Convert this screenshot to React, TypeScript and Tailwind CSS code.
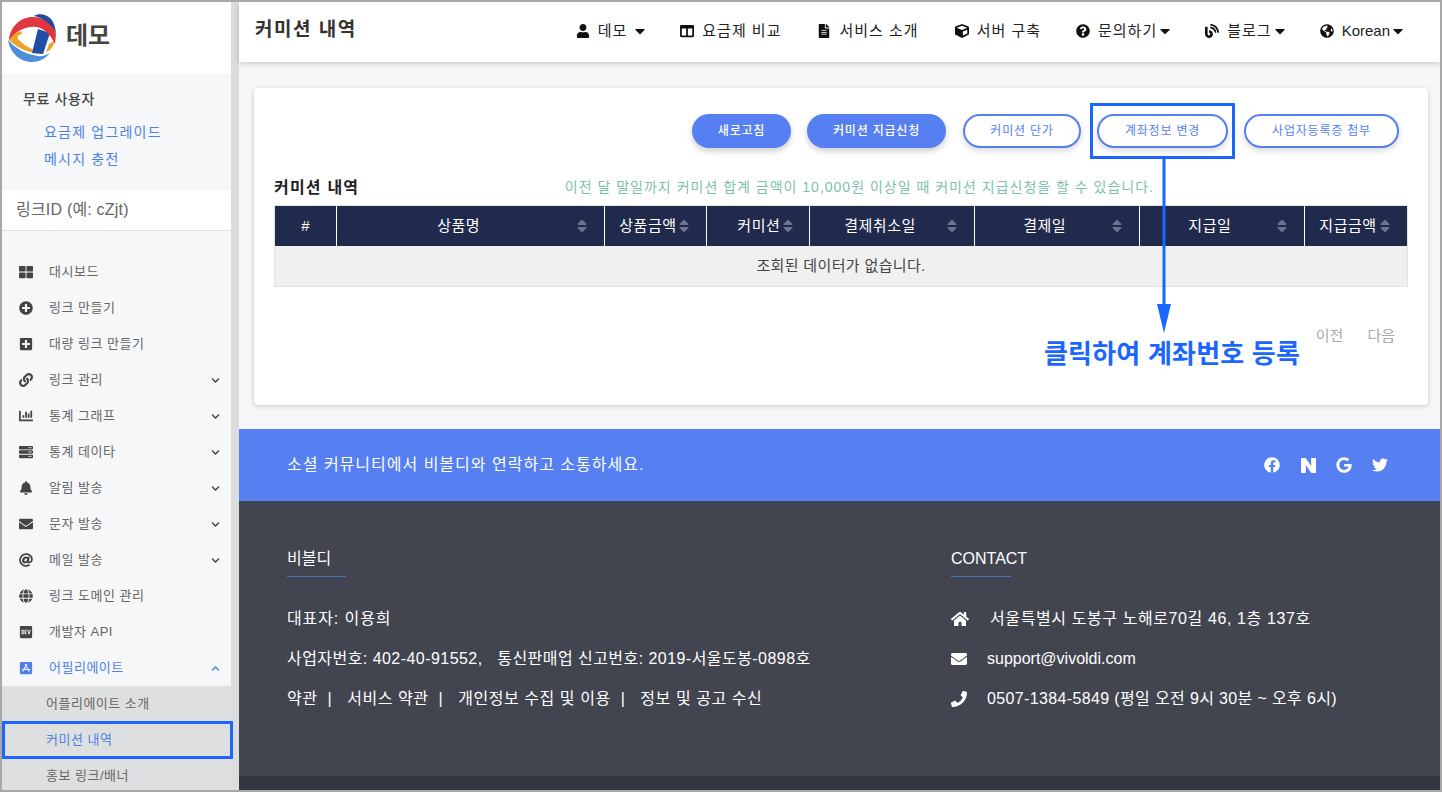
import React from 'react';
import {
  FaUser, FaColumns, FaFileAlt, FaCube, FaQuestionCircle, FaBlog, FaGlobeAmericas, FaThLarge, FaPlusCircle,
  FaPlusSquare, FaLink, FaChartBar, FaServer, FaBell, FaEnvelope, FaAt, FaGlobe, FaDev, FaAppStoreIos,
  FaChevronDown, FaChevronUp, FaHome, FaPhoneAlt, FaFacebook, FaGoogle, FaTwitter, FaSort, FaCaretDown,
} from 'react-icons/fa';
import { SiNaver } from 'react-icons/si';

const font = "font-['Liberation_Sans','Noto_Sans_CJK_KR',sans-serif]";

const menu = [
  { icon: <FaThLarge />, label: '대시보드' },
  { icon: <FaPlusCircle />, label: '링크 만들기' },
  { icon: <FaPlusSquare />, label: '대량 링크 만들기' },
  { icon: <FaLink />, label: '링크 관리', more: true },
  { icon: <FaChartBar />, label: '통계 그래프', more: true },
  { icon: <FaServer />, label: '통계 데이타', more: true },
  { icon: <FaBell />, label: '알림 발송', more: true },
  { icon: <FaEnvelope />, label: '문자 발송', more: true },
  { icon: <FaAt />, label: '메일 발송', more: true },
  { icon: <FaGlobe />, label: '링크 도메인 관리' },
  { icon: <FaDev />, label: '개발자 API' },
];

const nav = [
  { icon: <FaUser />, label: '데모', caret: 'ml-[-3px]' },
  { icon: <FaColumns />, label: '요금제 비교', box: 'mr-[1px]' },
  { icon: <FaFileAlt />, label: '서비스 소개', box: 'mr-[1px]' },
  { icon: <FaCube />, label: '서버 구축' },
  { icon: <FaQuestionCircle />, label: '문의하기', caret: 'ml-[-8px]' },
  { icon: <FaBlog />, label: '블로그', caret: 'ml-[-8px]' },
  { icon: <FaGlobeAmericas />, label: 'Korean', caret: 'ml-[-8px]', latin: true },
];

const columns = [
  { label: '상품명', width: 'w-[268px]', pad: 'pl-[6px]' },
  { label: '상품금액', width: 'w-[102px]', pad: 'pl-[14px]' },
  { label: '커미션', width: 'w-[103px]', pad: 'pl-[30px]' },
  { label: '결제취소일', width: 'w-[164px]', pad: 'pl-[6px]' },
  { label: '결제일', width: 'w-[165px]', pad: 'pl-[6px]' },
  { label: '지급일', width: 'w-[165px]', pad: 'pl-[6px]' },
  { label: '지급금액', width: 'w-[103px]', pad: 'pl-[14px]' },
];

const Logo = () => (
  <svg viewBox="0 0 48 50" className="h-[50px] w-[48px] shrink-0">
    <path d="M1 27C5 21 9 19 13 18L14 21C10 22 9 24 10 26C13 30 22 36 31 39L36 41C24 41 10 36 1 27z" fill="#eda12f" />
    <path d="M38 39L41 31L46 28C46 33 43 37 38 39z" fill="#eda12f" />
    <path d="M0 27C6 34 16 41 30 43C34 44 38 42 42 40C37 46 31 49 24 49C12 49 2 40 0 27z" fill="#4d90d6" />
    <path d="M30 16L42 20L35 41L24 40z" fill="#1f4ea8" />
    <path d="M1 27C2 14 12 4 25 4C36 4 46 12 48 21L47 31C42 21 36 15 28 14C18 13 8 18 1 27z" fill="#e2363f" />
    <path d="M26 3C30 0 38 1 42 5C45 8 47 12 48 20C44 12 36 5 26 3z" fill="#27479b" />
  </svg>
);

const Sidebar = () => (
  <aside className="flex h-full w-[237px] shrink-0 flex-col border-r-[8px] border-[#dcdcdc] bg-[#f5f7f9]">
    <div className="flex h-[72px] shrink-0 items-center gap-[10px] bg-white pl-[6px]">
      <Logo />
      <span className="mb-[4px] text-[24px] font-bold text-[#444]">데모</span>
    </div>
    <div className="h-[116px] shrink-0 pl-[21px] pt-[15px]">
      <p className="text-[14px] font-medium tracking-[0.6px] text-[#444]">무료 사용자</p>
      <div className="mt-[12px] flex flex-col gap-[6px] pl-[21px] text-[14px] tracking-[1.2px] text-[#4f7fe6]">
        <a>요금제 업그레이드</a>
        <a>메시지 충전</a>
      </div>
    </div>
    <div className="flex h-[41px] shrink-0 items-center border-b border-[#e0e0e0] bg-white pl-[14px] text-[16px] tracking-[0.2px] text-[#666]">
      링크ID (예: cZjt)
    </div>
    <nav className="flex-1 pt-[23px] text-[13px] tracking-[0.5px] text-[#666]">
      {menu.map((m) => (
        <div key={m.label} className="flex h-[36px] items-center pl-[17px] pr-[11px]">
          <span className="w-[30px] text-[14px] text-[#444]">{m.icon}</span>
          <span className="flex-1">{m.label}</span>
          {m.more && <FaChevronDown className="text-[9px] text-[#444]" />}
        </div>
      ))}
      <div className="flex h-[36px] items-center pl-[17px] pr-[11px] text-[#4f7fe6]">
        <span className="w-[30px] text-[14px]"><FaAppStoreIos /></span>
        <span className="flex-1">어필리에이트</span>
        <FaChevronUp className="text-[9px]" />
      </div>
      <div className="bg-[#dedfe1] pl-[44px]">
        <div className="flex h-[36px] items-center">어플리에이트 소개</div>
        <div className="flex h-[36px] items-center text-[#4f7fe6]">커미션 내역</div>
        <div className="flex h-[36px] items-center">홍보 링크/배너</div>
      </div>
    </nav>
  </aside>
);

const Header = () => (
  <header className="flex h-[60px] shrink-0 items-center justify-between bg-white pl-[16px] pr-[37px] shadow-[0_2px_5px_rgba(0,0,0,0.18)]">
    <h1 className="mb-[4px] text-[19px] font-bold tracking-[1.5px] text-[#333]">커미션 내역</h1>
    <div className="mb-[2px] flex items-center gap-[35px] text-[15px] text-[#222]">
      {nav.map((n) => (
        <div key={n.label} className={`${n.box ?? ''} flex items-center gap-[8px]`}>
          <span className="text-[14px] text-[#111]">{n.icon}</span>
          <span className={n.latin ? '' : 'tracking-[1px]'}>{n.label}</span>
          {n.caret && <FaCaretDown className={`${n.caret} -mr-[3px] text-[16px] text-[#111]`} />}
        </div>
      ))}
    </div>
  </header>
);

const Card = () => (
  <section className="ml-[15px] mr-[12px] mt-[26px] h-[317px] shrink-0 rounded-[4px] bg-white px-[20px] pt-[26px] shadow-[0_1px_5px_rgba(0,0,0,0.2)]">
    <div className="flex justify-end gap-[16px] pr-[9px] text-[12px] tracking-[0.8px]">
      <button className="h-[34px] w-[99px] rounded-full bg-[#5680f2] font-medium text-white shadow-[0_3px_6px_rgba(0,0,0,0.2)]">새로고침</button>
      <button className="mr-[1px] h-[34px] w-[139px] rounded-full bg-[#5680f2] font-medium text-white shadow-[0_3px_6px_rgba(0,0,0,0.2)]">커미션 지급신청</button>
      <button className="h-[34px] w-[118px] rounded-full border-2 border-[#5680f2] bg-white text-[#5680f2] shadow-[0_3px_6px_rgba(0,0,0,0.15)]">커미션 단가</button>
      <button className="h-[34px] w-[131px] rounded-full border-2 border-[#5680f2] bg-white text-[#5680f2] shadow-[0_3px_6px_rgba(0,0,0,0.15)]">계좌정보 변경</button>
      <button className="h-[34px] w-[155px] rounded-full border-2 border-[#5680f2] bg-white text-[#5680f2] shadow-[0_3px_6px_rgba(0,0,0,0.15)]">사업자등록증 첨부</button>
    </div>
    <div className="mt-[29px] flex h-[21px] items-center justify-between pr-[254px]">
      <h2 className="text-[16px] font-bold tracking-[1.2px] text-[#222]">커미션 내역</h2>
      <p className="text-[14px] tracking-[1px] text-[#7dbfae]">이전 달 말일까지 커미션 합계 금액이 10,000원 이상일 때 커미션 지급신청을 할 수 있습니다.</p>
    </div>
    <table className="mt-[7px] w-[1134px] table-fixed border border-[#e3e3e3] text-[15px]">
      <thead>
        <tr className="h-[40px] bg-[#202a4d] text-white">
          <th className="w-[62px] font-normal">#</th>
          {columns.map((c) => (
            <th key={c.label} className={`${c.width} border-l border-white font-normal`}>
              <div className={`${c.pad} flex items-center pr-[14px]`}>
                <span className="flex-1 whitespace-nowrap tracking-[0.5px]">{c.label}</span>
                <FaSort className="shrink-0 text-[16px] text-[#6c738c]" />
              </div>
            </th>
          ))}
        </tr>
      </thead>
      <tbody>
        <tr className="h-[41px] bg-[#f0f0f0]">
          <td colSpan={8} className="text-center tracking-[0.35px] text-[#444]">조회된 데이터가 없습니다.</td>
        </tr>
      </tbody>
    </table>
    <div className="mt-[38px] flex justify-end gap-[24px] pr-[13px] text-[15px] text-[#aaa]">
      <span>이전</span>
      <span>다음</span>
    </div>
  </section>
);

const Footer = () => (
  <footer className="mt-[24px] shrink-0 text-white">
    <div className="flex h-[72px] items-center justify-between bg-[#5680f2] pl-[48px] pr-[52px] text-[16px] tracking-[1px]">
      <p>소셜 커뮤니티에서 비볼디와 연락하고 소통하세요.</p>
      <div className="flex items-center gap-[20px] text-[16px]">
        <FaFacebook />
        <SiNaver className="mx-[0.5px] text-[15px]" />
        <FaGoogle />
        <FaTwitter />
      </div>
    </div>
    <div className="grid h-[275px] grid-cols-[664px_1fr] bg-[#42454f] pl-[48px] pt-[46px] text-[16px]">
      <div>
        <h3 className="text-[16px]">비볼디</h3>
        <div className="mt-[5px] h-px w-[59px] bg-[#4c73c0]" />
        <p className="mt-[31px] leading-[22px] tracking-[0.9px]">대표자: 이용희</p>
        <p className="mt-[18px] leading-[22px] tracking-[0.45px]">사업자번호: 402-40-91552, &nbsp;&nbsp;통신판매업 신고번호: 2019-서울도봉-0898호</p>
        <p className="mt-[18px] leading-[22px] tracking-[0.55px]">약관 &nbsp;| &nbsp; 서비스 약관 &nbsp;| &nbsp; 개인정보 수집 및 이용 &nbsp;| &nbsp; 정보 및 공고 수신</p>
      </div>
      <div>
        <h3 className="text-[16px]">CONTACT</h3>
        <div className="mt-[5px] h-px w-[60px] bg-[#4c73c0]" />
        <p className="mt-[31px] flex items-center leading-[22px] tracking-[0.6px]"><FaHome className="mr-[21px] w-[18px] text-[18px]" />서울특별시 도봉구 노해로70길 46, 1층 137호</p>
        <p className="mt-[18px] flex items-center leading-[22px]"><FaEnvelope className="mr-[20px] w-[16px] text-[16px]" />support@vivoldi.com</p>
        <p className="mt-[18px] flex items-center leading-[22px] tracking-[0.36px]"><FaPhoneAlt className="mr-[20px] w-[16px] -scale-x-100 text-[16px]" />0507-1384-5849 (평일 오전 9시 30분 ~ 오후 6시)</p>
      </div>
    </div>
    <div className="h-[20px] bg-[#343641]" />
  </footer>
);

export default function App() {
  return (
    <div className={`${font} relative flex h-[792px] w-[1442px] overflow-hidden border-2 border-[#a8a8a8]`}>
      <Sidebar />
      <main className="flex min-w-0 flex-1 flex-col bg-[#f6f7f9]">
        <Header />
        <Card />
        <Footer />
      </main>
      {/* annotations drawn over the page */}
      <div className="absolute left-[0px] top-[719px] h-[38px] w-[231px] border-[3px] border-[#1a66ff]" />
      <div className="absolute left-[1088px] top-[101px] h-[56px] w-[145px] border-[3px] border-[#1a66ff]" />
      <svg className="absolute left-[1154px] top-[155px] h-[178px] w-[16px]" viewBox="0 0 16 178">
        <rect x="6.5" y="0" width="3" height="150" fill="#1a66ff" />
        <path d="M1 147h14l-7 29z" fill="#1a66ff" />
      </svg>
      <span className="absolute left-[1042px] top-[333px] text-[26px] font-bold tracking-[0.2px] text-[#1a66ff]">클릭하여 계좌번호 등록</span>
    </div>
  );
}
